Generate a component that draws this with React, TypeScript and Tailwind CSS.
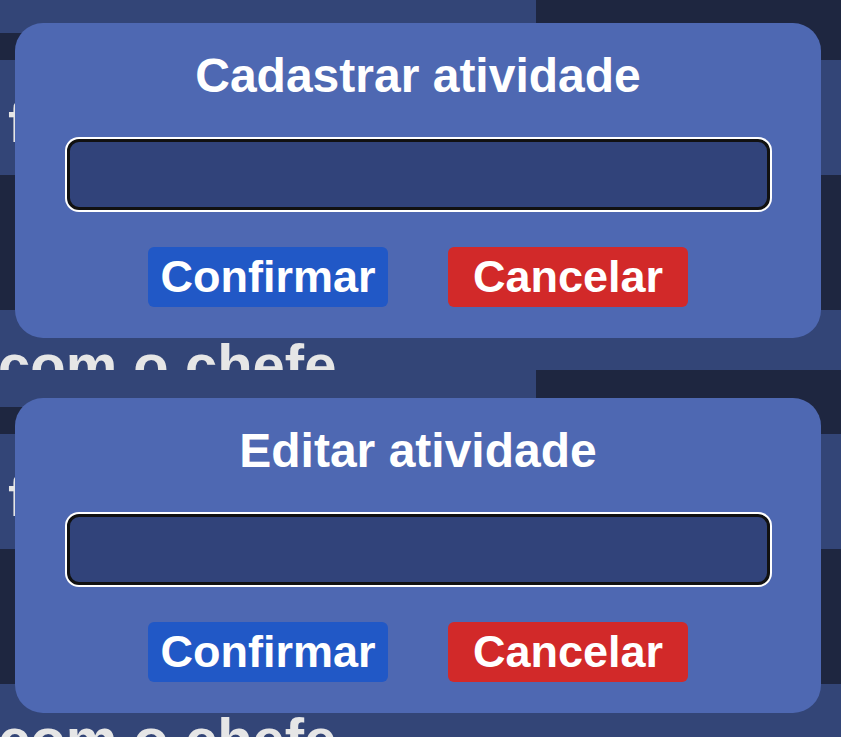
import React from 'react';

const font = { fontFamily: '"Liberation Sans", Arial, sans-serif' };

type DialogProps = { title: string };

const Dialog = ({ title }: DialogProps) => {
  return (
    <div className="w-[806px] h-[315px] rounded-[28px] bg-[#4e68b2] pt-[29px] flex flex-col items-center">
      <h2 className="text-[48px] leading-[48px] font-bold text-white">{title}</h2>
      <input
        type="text"
        className="mt-[39px] w-[703px] h-[71px] rounded-xl border-[3px] border-[#111] bg-[#31437a] ring-2 ring-white outline-none"
      />
      <div className="mt-[37px] flex gap-[60px]">
        <button className="w-60 h-[60px] rounded-md bg-[#2158c6] text-white text-[45px] leading-[60px] font-bold">
          Confirmar
        </button>
        <button className="w-60 h-[60px] rounded-md bg-[#d22929] text-white text-[45px] leading-[60px] font-bold">
          Cancelar
        </button>
      </div>
    </div>
  );
};

const Backdrop = ({ first }: { first: boolean }) => {
  return (
    <div className="flex flex-col">
      <div className={first ? 'w-[536px] h-[33px] bg-[#334577]' : 'w-[536px] h-[37px] bg-[#334577]'} />
      <div className="h-[27px]" />
      <div className="h-[115px] bg-[#334577] pl-[8px] pt-[33px]">
        <p className="text-[58px] leading-[58px] font-bold text-[#e6e6e6] whitespace-nowrap">fazer relatório</p>
      </div>
      <div className="h-[135px]" />
      <div className="h-[120px] bg-[#334577] pt-[26px]">
        <p className="text-[58px] leading-[58px] font-bold text-[#e6e6e6] whitespace-nowrap -ml-[2px]">
          com o chefe
        </p>
      </div>
    </div>
  );
};

const App = () => {
  return (
    <div className="w-[841px] h-[737px] overflow-hidden bg-[#1e2640]" style={font}>
      <div className="relative h-[370px] overflow-hidden">
        <Backdrop first />
        <div className="absolute left-[15px] top-[23px]">
          <Dialog title="Cadastrar atividade" />
        </div>
      </div>
      <div className="relative h-[367px] overflow-hidden">
        <Backdrop first={false} />
        <div className="absolute left-[15px] top-[28px]">
          <Dialog title="Editar atividade" />
        </div>
      </div>
    </div>
  );
};

export default App;
